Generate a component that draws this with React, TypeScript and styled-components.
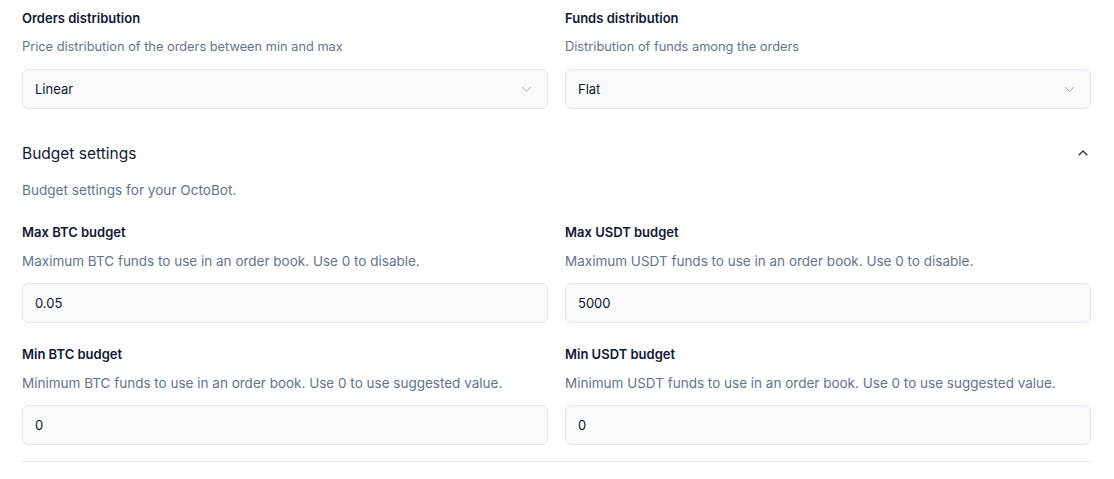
import React, { FC } from "react";
import styled, { createGlobalStyle } from "styled-components";
import { ChevronDown, ChevronUp } from "lucide-react";

const GlobalStyle = createGlobalStyle`
  html, body {
    margin: 0;
    padding: 0;
    background: #ffffff;
    font-family: Inter, "Noto Sans", sans-serif;
  }
`;

const Page = styled.div`
  padding: 8px 23px 0 22px;
  display: flex;
  flex-direction: column;
`;

const FieldGrid = styled.div`
  display: grid;
  grid-template-columns: 1fr 1fr;
  column-gap: 17px;
  row-gap: 21px;
`;

const Field = styled.div`
  display: flex;
  flex-direction: column;
`;

const Label = styled.div`
  font-size: 13px;
  font-weight: 600;
  line-height: 20px;
  color: #111833;
`;

const Description = styled.div<{ $wide?: boolean }>`
  margin-top: 9px;
  font-size: ${(p) => (p.$wide ? "13.5px" : "12.8px")};
  line-height: 20px;
  color: #64748b;
  white-space: nowrap;
`;

const Control = styled.div<{ $select?: boolean }>`
  margin-top: 12px;
  height: 40px;
  box-sizing: border-box;
  border: 1px solid #e2e8f0;
  border-radius: 6px;
  background: #f8fafc;
  display: flex;
  align-items: center;
  justify-content: space-between;
  padding: 0 ${(p) => (p.$select ? "13px" : "12px")} 0 12px;
  font-size: 13px;
  color: #0f172a;
`;

const SectionHeader = styled.div`
  margin-top: 24px;
  height: 40px;
  display: flex;
  align-items: center;
  justify-content: space-between;
  font-size: 15.5px;
  color: #111833;
`;

const SectionDescription = styled(Description)`
  margin-top: 7px;
  margin-bottom: 22px;
  font-size: 13.6px;
`;

const Divider = styled.hr`
  margin: 16px 0 0;
  border: none;
  border-top: 1px solid #e2e8f0;
`;

type FieldProps = {
  label: string;
  description: string;
  value: string;
  select?: boolean;
  wide?: boolean;
};

const FormField: FC<FieldProps> = ({ label, description, value, select, wide }) => (
  <Field>
    <Label>{label}</Label>
    <Description $wide={wide}>{description}</Description>
    <Control $select={select}>
      <span>{value}</span>
      {select && <ChevronDown size={15} strokeWidth={1.5} color="#94a3b8" />}
    </Control>
  </Field>
);

export default function App() {
  return (
    <>
      <GlobalStyle />
      <Page>
        <FieldGrid>
          <FormField
            label="Orders distribution"
            description="Price distribution of the orders between min and max"
            value="Linear"
            select
          />
          <FormField
            label="Funds distribution"
            description="Distribution of funds among the orders"
            value="Flat"
            select
          />
        </FieldGrid>
        <SectionHeader>
          <span>Budget settings</span>
          <ChevronUp size={16} strokeWidth={1.75} color="#1e293b" />
        </SectionHeader>
        <SectionDescription>Budget settings for your OctoBot.</SectionDescription>
        <FieldGrid>
          <FormField
            label="Max BTC budget"
            description="Maximum BTC funds to use in an order book. Use 0 to disable."
            value="0.05"
            wide
          />
          <FormField
            label="Max USDT budget"
            description="Maximum USDT funds to use in an order book. Use 0 to disable."
            value="5000"
            wide
          />
          <FormField
            label="Min BTC budget"
            description="Minimum BTC funds to use in an order book. Use 0 to use suggested value."
            value="0"
            wide
          />
          <FormField
            label="Min USDT budget"
            description="Minimum USDT funds to use in an order book. Use 0 to use suggested value."
            value="0"
            wide
          />
        </FieldGrid>
        <Divider />
      </Page>
    </>
  );
}
